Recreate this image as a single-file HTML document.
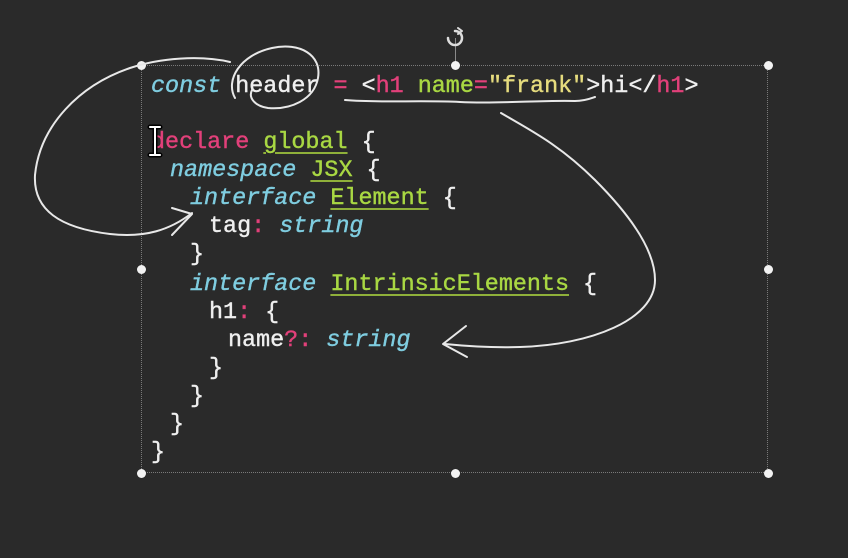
<!DOCTYPE html>
<html><head><meta charset="utf-8"><style>
html,body{margin:0;padding:0;background:#2a2a2a;width:848px;height:558px;overflow:hidden;position:relative}
.l{position:absolute;font-family:"Liberation Mono","DejaVu Sans Mono",monospace;font-size:23.4px;line-height:28px;white-space:pre;color:#efefef;letter-spacing:0;-webkit-text-stroke:0.4px currentColor}
.k{color:#7fcde0;font-style:italic}
.p{color:#e2407a}
.g{color:#a9d843;text-decoration:underline;text-decoration-color:#8fb03a;text-underline-offset:4px;text-decoration-thickness:2px}
.gn{color:#a9d843}
.y{color:#e6dc7e}
.h{position:absolute;width:9px;height:9px;border-radius:50%;background:#f2f2f2;margin:-4.5px 0 0 -4.5px}
</style></head><body>
<div style="position:absolute;left:141px;top:65px;width:627px;height:408px;border:1px dotted #7a7a7a;box-sizing:border-box"></div>
<div style="position:absolute;left:455px;top:38px;width:1px;height:27px;background:#8a8a8a"></div>
<div class="h" style="left:141px;top:65px"></div><div class="h" style="left:455px;top:65px"></div><div class="h" style="left:768px;top:65px"></div>
<div class="h" style="left:141px;top:269px"></div><div class="h" style="left:768px;top:269px"></div>
<div class="h" style="left:141px;top:473px"></div><div class="h" style="left:455px;top:473px"></div><div class="h" style="left:768px;top:473px"></div>

<div class="l" style="left:151px;top:73px"><span class="k">const</span> header <span class="p">=</span> &lt;<span class="p">h1</span> <span class="gn">name</span><span class="p">=</span><span class="y">"frank"</span>&gt;hi&lt;/<span class="p">h1</span>&gt;</div>
<div class="l" style="left:151px;top:129px"><span class="p">declare</span> <span class="g">global</span> {</div>
<div class="l" style="left:170px;top:157px"><span class="k">namespace</span> <span class="g">JSX</span> {</div>
<div class="l" style="left:190px;top:185px"><span class="k">interface</span> <span class="g">Element</span> {</div>
<div class="l" style="left:209px;top:213px">tag<span class="p">:</span> <span class="k">string</span></div>
<div class="l" style="left:190px;top:241px">}</div>
<div class="l" style="left:190px;top:271px"><span class="k">interface</span> <span class="g">IntrinsicElements</span> {</div>
<div class="l" style="left:209px;top:299px">h1<span class="p">:</span> {</div>
<div class="l" style="left:228px;top:327px">name<span class="p">?:</span> <span class="k">string</span></div>
<div class="l" style="left:209px;top:355px">}</div>
<div class="l" style="left:190px;top:383px">}</div>
<div class="l" style="left:170px;top:411px">}</div>
<div class="l" style="left:151px;top:439px">}</div>

<svg width="848" height="558" style="position:absolute;left:0;top:0" fill="none" stroke="#e8e8e8" stroke-width="2" stroke-linecap="round" stroke-linejoin="round">
<path d="M150 127 h10 M155 127 v28 M150 155 h10" stroke="#000" stroke-width="5"/>
<path d="M150 127 h10 M155 127 v28 M150 155 h10" stroke="#fff" stroke-width="2"/>
<path d="M455 38 m-7 0 a7 7 0 1 0 7 -7" stroke="#ddd" stroke-width="2.5"/>
<path d="M458 28 l4 3 -4 3" stroke="#ddd" stroke-width="2"/>
<path d="M230 62 C200 55 160 58 130 68 C80 85 40 125 35 175 C33 210 60 228 110 234 C145 238 170 230 192 213"/>
<path d="M172 208 L192 214 L172 235"/>
<path d="M235 98 C225 80 240 55 272 48 C300 42 322 55 318 78 C314 100 290 110 268 108 C255 106 248 98 252 90"/>
<path d="M345 100 C380 103 420 100 460 102 C500 104 540 100 575 101 C585 101 592 98 595 97"/>
<path d="M501 113 C530 130 560 145 595 180 C630 215 655 250 655 280 C655 320 590 345 520 347 C490 348 465 346 445 344"/>
<path d="M466 326 L443 344 L467 357"/>
</svg>
</body></html>
